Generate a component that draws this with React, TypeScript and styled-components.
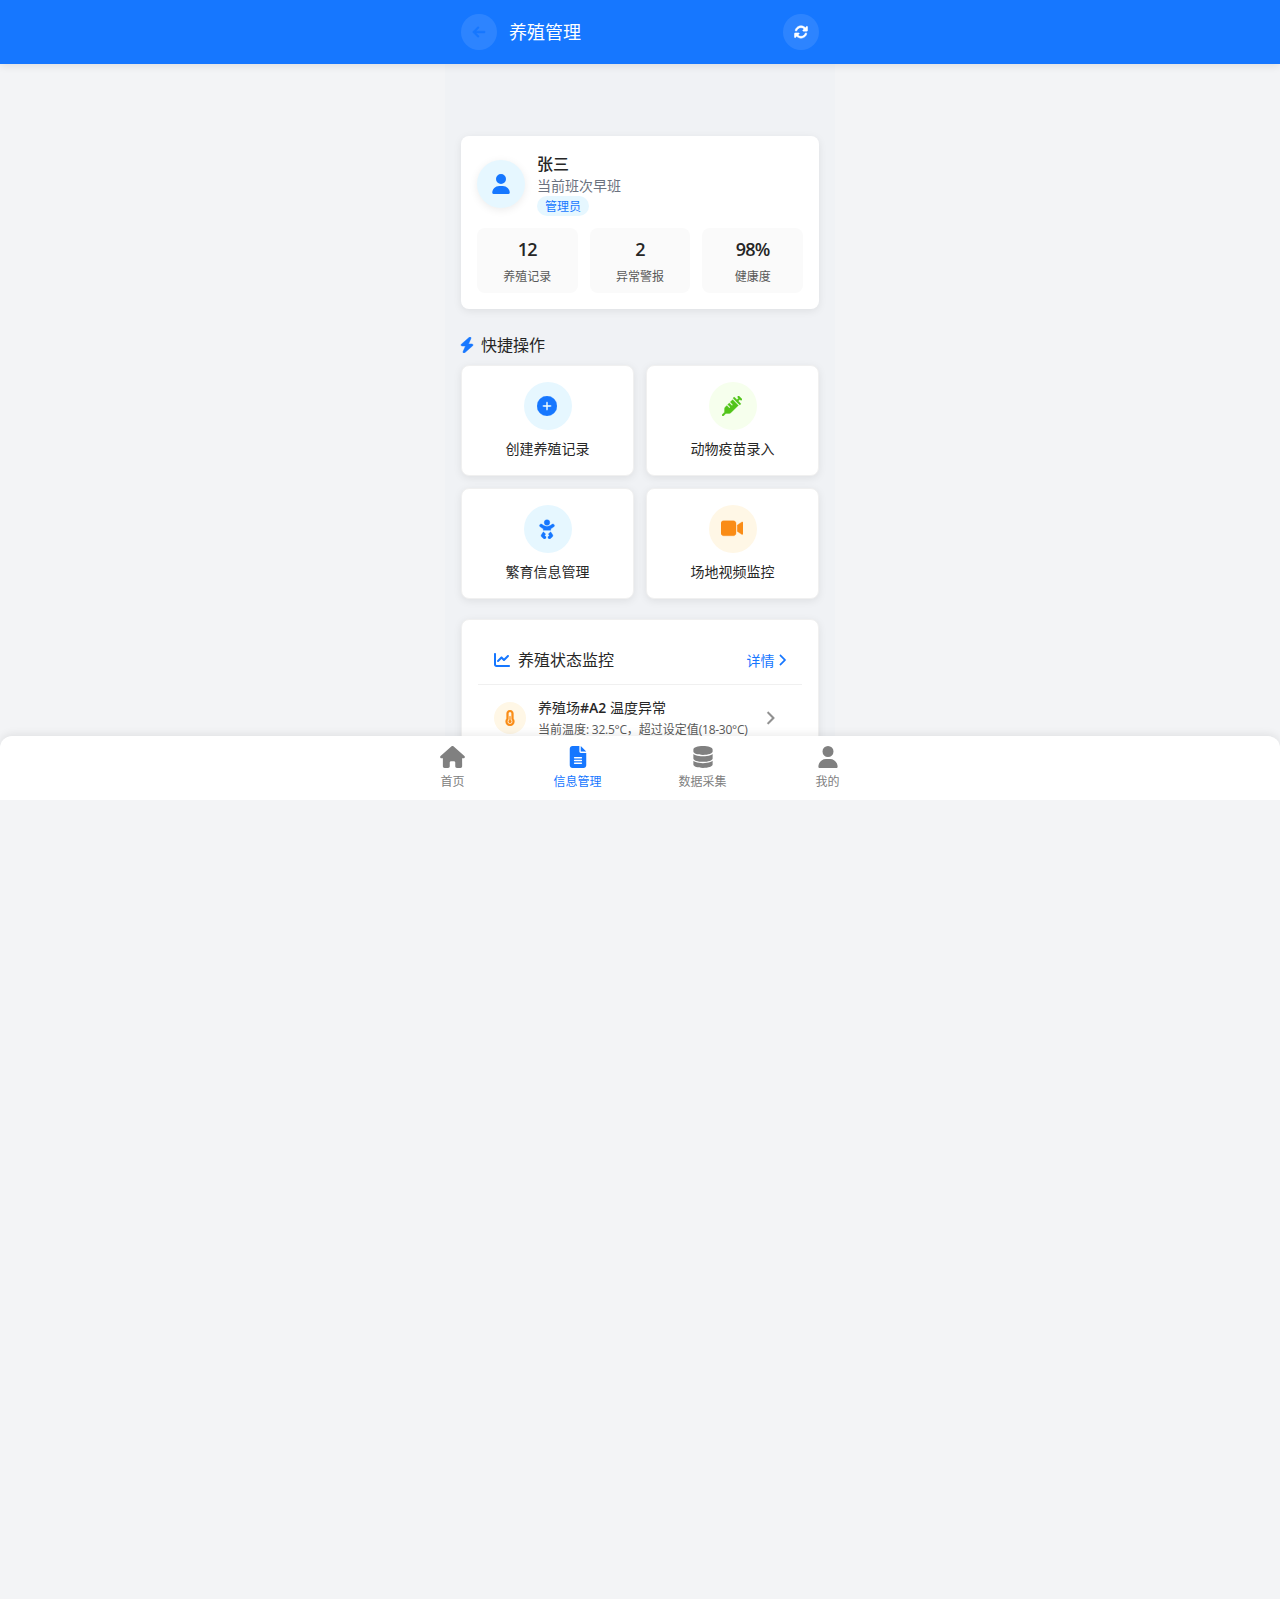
import React from "react";
import styled, { createGlobalStyle } from "styled-components";
import {
  FaArrowLeft,
  FaRotate,
  FaUser,
  FaBolt,
  FaCirclePlus,
  FaSyringe,
  FaBaby,
  FaVideo,
  FaChartLine,
  FaChevronRight,
  FaTemperatureHalf,
  FaHouse,
  FaFileLines,
  FaDatabase,
} from "react-icons/fa6";

const GlobalStyle = createGlobalStyle`
  *, *::before, *::after { box-sizing: border-box; }
  body {
    margin: 0;
    background: #f3f4f6;
    color: #262626;
    font-family: "Open Sans", "Noto Sans CJK SC", sans-serif;
    font-size: 14px;
    line-height: 21px;
  }
  button { font: inherit; border: 0; padding: 0; cursor: pointer; }
  svg { display: block; flex: none; }
`;

const Screen = styled.div`
  display: flex;
  flex-direction: column;
  height: 800px;
`;

const Header = styled.header`
  position: relative;
  z-index: 2;
  flex: none;
  height: 64px;
  background: #1677ff;
  box-shadow: 0 2px 8px rgba(0, 0, 0, 0.09);
`;

const HeaderInner = styled.div`
  display: flex;
  align-items: center;
  gap: 12px;
  width: 390px;
  height: 100%;
  margin: 0 auto;
  padding: 0 16px;
`;

const RoundButton = styled.button<{ $color: string }>`
  display: flex;
  align-items: center;
  justify-content: center;
  width: 36px;
  height: 36px;
  border-radius: 50%;
  background: rgba(255, 255, 255, 0.1);
  color: ${(p) => p.$color};
  font-size: 14px;

  svg { stroke-width: 18px; }
`;

const PageTitle = styled.h1`
  flex: 1;
  margin: 0;
  color: #fff;
  font-size: 18px;
  font-weight: 400;
  line-height: 27px;
`;

const Content = styled.main`
  flex: 1;
  min-height: 0;
  width: 390px;
  margin: 0 auto;
  padding: 72px 16px 0;
  overflow: hidden;
  background: #f0f2f5;
`;

const Profile = styled.section`
  height: 173px;
  padding: 16px;
  border-radius: 8px;
  background: #fff;
  box-shadow: 0 2px 8px rgba(0, 0, 0, 0.08);
`;

const ProfileTop = styled.div`
  display: flex;
  align-items: center;
  gap: 12px;
  height: 64px;
`;

const Avatar = styled.div`
  display: flex;
  align-items: center;
  justify-content: center;
  width: 48px;
  height: 48px;
  padding-bottom: 1px;
  border-radius: 50%;
  background: #e6f7ff;
  color: #1677ff;
  font-size: 20px;
  box-shadow: 0 2px 8px rgba(0, 0, 0, 0.08);
`;

const ProfileInfo = styled.div`
  display: flex;
  flex-direction: column;
  align-items: flex-start;
`;

const Name = styled.div`
  font-size: 16px;
  font-weight: 500;
  line-height: 24px;
`;

const Shift = styled.div`
  color: #6b7280;
  line-height: 20px;
`;

const Role = styled.span`
  height: 20px;
  padding: 1px 8px 0;
  border-radius: 10px;
  background: #e6f7ff;
  color: #1677ff;
  font-size: 12px;
  line-height: 20px;
`;

const Stats = styled.div`
  display: grid;
  grid-template-columns: repeat(3, 1fr);
  gap: 12px;
  margin-top: 12px;
`;

const Stat = styled.div`
  display: flex;
  flex-direction: column;
  align-items: center;
  height: 65px;
  padding-top: 8px;
  border-radius: 8px;
  background: #fafafa;
`;

const StatValue = styled.div`
  font-size: 18px;
  font-weight: 600;
  line-height: 27px;
  letter-spacing: -0.7px;
`;

const StatLabel = styled.div`
  margin-top: 5px;
  color: #595959;
  font-size: 12px;
  line-height: 18px;
`;

const SectionTitle = styled.h2`
  display: flex;
  align-items: center;
  gap: 8px;
  margin: 0;
  font-size: 16px;
  font-weight: 400;
  line-height: 24px;

  svg { color: #1677ff; }
`;

const QuickSection = styled.section`
  margin-top: 24px;
`;

const QuickGrid = styled.div`
  display: grid;
  grid-template-columns: 1fr 1fr;
  gap: 12px;
  margin-top: 8px;
`;

const Card = styled.div`
  border: 1px solid #f0f0f0;
  border-radius: 8px;
  background: #fff;
  box-shadow: 0 2px 8px rgba(0, 0, 0, 0.08);
`;

const QuickCard = styled(Card)`
  display: flex;
  flex-direction: column;
  align-items: center;
  gap: 8px;
  height: 111px;
  padding: 16px;
`;

const IconDisc = styled.div<{ $size: number; $bg: string; $color: string; $icon: number }>`
  display: flex;
  flex: none;
  align-items: center;
  justify-content: center;
  width: ${(p) => p.$size}px;
  height: ${(p) => p.$size}px;
  padding: 0 1px 1px 0;
  border-radius: 50%;
  background: ${(p) => p.$bg};
  color: ${(p) => p.$color};
  font-size: ${(p) => p.$icon}px;

  svg { stroke-width: 8px; }
`;

const StatusCard = styled(Card)`
  margin-top: 20px;
  padding: 16px;
`;

const StatusHead = styled.div`
  display: flex;
  align-items: center;
  justify-content: space-between;
  height: 49px;
  padding: 0 16px;
  border-bottom: 1px solid #f0f0f0;
`;

const Details = styled.a`
  display: flex;
  align-items: center;
  gap: 4px;
  height: 22px;
  color: #1677ff;
`;

const Alert = styled.div`
  display: flex;
  align-items: center;
  gap: 12px;
  padding: 12px 28px 12px 16px;
  color: #8c8c8c;
`;

const AlertText = styled.div`
  flex: 1;
  white-space: nowrap;
`;

const AlertTitle = styled.div`
  color: #262626;
`;

const AlertCode = styled.span`
  font-weight: 600;
`;

const AlertDetail = styled.div`
  margin-top: 3px;
  color: #595959;
  font-size: 12px;
  line-height: 18px;
`;

const Reading = styled.span`
  letter-spacing: -0.25px;
`;

const TabBar = styled.nav`
  position: relative;
  z-index: 2;
  flex: none;
  height: 64px;
  border-radius: 12px 12px 0 0;
  background: #fff;
  box-shadow: 0 -2px 8px rgba(0, 0, 0, 0.08);
`;

const TabList = styled.div`
  display: grid;
  grid-template-columns: repeat(4, 1fr);
  width: 500px;
  margin: 0 auto;
`;

const Tab = styled.a<{ $active?: boolean }>`
  display: flex;
  flex-direction: column;
  align-items: center;
  gap: 5px;
  padding-top: 10px;
  color: ${(p) => (p.$active ? "#1677ff" : "#808080")};
  font-size: 12px;
  line-height: 18px;

  svg { height: 22px; }
`;

const FitIcon = styled.span<{ $w: number; $size: number }>`
  display: flex;
  justify-content: center;
  width: ${(p) => p.$w}px;
  font-size: ${(p) => p.$size}px;

  svg { stroke-width: 16px; }
`;

const stats = [
  { value: "12", label: "养殖记录" },
  { value: "2", label: "异常警报" },
  { value: "98%", label: "健康度" },
];

const actions = [
  { label: "创建养殖记录", icon: <FaCirclePlus />, bg: "#e6f7ff", color: "#1677ff" },
  { label: "动物疫苗录入", icon: <FaSyringe />, bg: "#f6ffed", color: "#52c41a" },
  { label: "繁育信息管理", icon: <FaBaby />, bg: "#e6f7ff", color: "#1677ff" },
  { label: "场地视频监控", icon: <FaVideo size="22.5px" />, bg: "#fff7e6", color: "#fa8c16" },
];

const tabs = [
  { label: "首页", icon: <FaHouse size={25} /> },
  { label: "信息管理", icon: <FaFileLines size={22} />, active: true },
  { label: "数据采集", icon: <FaDatabase size={22} /> },
  { label: "我的", icon: <FaUser size={22} /> },
];

export default function App() {
  return (
    <>
      <GlobalStyle />
      <Screen>
        <Header>
          <HeaderInner>
            <RoundButton $color="#1677ff"><FaArrowLeft /></RoundButton>
            <PageTitle>养殖管理</PageTitle>
            <RoundButton $color="#fff"><FaRotate /></RoundButton>
          </HeaderInner>
        </Header>
        <Content>
          <Profile>
            <ProfileTop>
              <Avatar><FaUser /></Avatar>
              <ProfileInfo>
                <Name>张三</Name>
                <Shift>当前班次早班</Shift>
                <Role>管理员</Role>
              </ProfileInfo>
            </ProfileTop>
            <Stats>
              {stats.map((s) => (
                <Stat key={s.label}>
                  <StatValue>{s.value}</StatValue>
                  <StatLabel>{s.label}</StatLabel>
                </Stat>
              ))}
            </Stats>
          </Profile>
          <QuickSection>
            <SectionTitle>
              <FitIcon $w={12} $size={16}><FaBolt /></FitIcon>
              快捷操作
            </SectionTitle>
            <QuickGrid>
              {actions.map((a) => (
                <QuickCard key={a.label}>
                  <IconDisc $size={48} $bg={a.bg} $color={a.color} $icon={20}>{a.icon}</IconDisc>
                  <span>{a.label}</span>
                </QuickCard>
              ))}
            </QuickGrid>
          </QuickSection>
          <StatusCard>
            <StatusHead>
              <SectionTitle>
                <FaChartLine />
                养殖状态监控
              </SectionTitle>
              <Details>
                详情
                <FitIcon $w={7.5} $size={12}><FaChevronRight /></FitIcon>
              </Details>
            </StatusHead>
            <Alert>
              <IconDisc $size={32} $bg="#fff7e6" $color="#fa8c16" $icon={16}><FaTemperatureHalf /></IconDisc>
              <AlertText>
                <AlertTitle>养殖场<AlertCode>#A2</AlertCode> 温度异常</AlertTitle>
                <AlertDetail>
                  当前温度<Reading>: 32.5°C</Reading>，超过设定值<Reading>(18-30°C)</Reading>
                </AlertDetail>
              </AlertText>
              <FitIcon $w={9} $size={14}><FaChevronRight /></FitIcon>
            </Alert>
          </StatusCard>
        </Content>
        <TabBar>
          <TabList>
            {tabs.map((t) => (
              <Tab key={t.label} $active={t.active}>
                {t.icon}
                <span>{t.label}</span>
              </Tab>
            ))}
          </TabList>
        </TabBar>
      </Screen>
    </>
  );
}
